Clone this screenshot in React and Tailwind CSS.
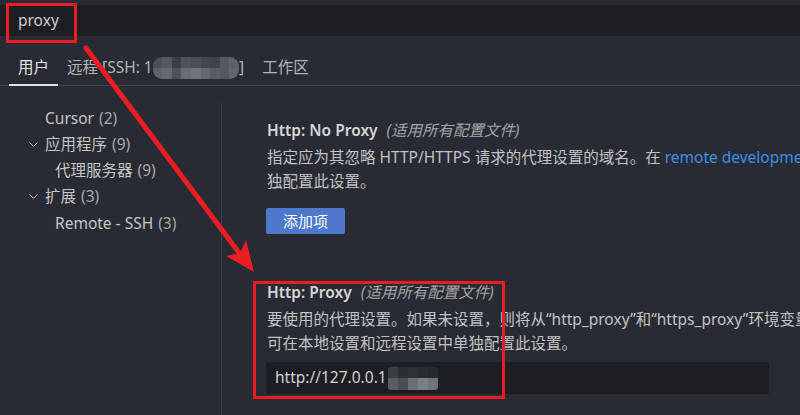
import { ChevronDown } from "lucide-react";

const tocItems = [
  { label: "Cursor", count: 2, level: 0 },
  { label: "应用程序", count: 9, level: 0, open: true },
  { label: "代理服务器", count: 9, level: 1 },
  { label: "扩展", count: 3, level: 0, open: true },
  { label: "Remote - SSH", count: 3, level: 1 },
];

// mosaic blocks used to hide the host address
const tabMosaicTop = [
  "bg-[#4c4f55]", "bg-[#55585e]", "bg-[#3a3d43]", "bg-[#4f5258]", "bg-[#4a4d53]",
  "bg-[#44474d]", "bg-[#3f4248]", "bg-[#55585e]", "bg-[#5e6167]",
];
const tabMosaicBottom = [
  "bg-[#5f6268]", "bg-[#66696f]", "bg-[#4e5157]", "bg-[#6a6d73]", "bg-[#707379]",
  "bg-[#65686e]", "bg-[#5a5d63]", "bg-[#55585e]", "bg-[#62656b]",
];
const inputMosaicTop = ["bg-[#3b3e43]", "bg-[#2c2e32]", "bg-[#303236]", "bg-[#2a2c30]", "bg-[#26282c]"];
const inputMosaicBottom = ["bg-[#5a5e64]", "bg-[#4a4e54]", "bg-[#6b7076]", "bg-[#7a7f86]", "bg-[#6e7379]"];

const Mosaic = ({ top, bottom, cell, className }) => (
  <span className={`inline-flex flex-col overflow-hidden blur-[0.6px] ${className}`}>
    <span className="flex">
      {top.map((c, i) => (
        <span key={i} className={`${cell} ${c}`} />
      ))}
    </span>
    <span className="flex">
      {bottom.map((c, i) => (
        <span key={i} className={`${cell} ${c}`} />
      ))}
    </span>
  </span>
);

const SettingTitle = ({ name }) => (
  <div className="h-[24px] flex items-center whitespace-nowrap">
    <span className="font-semibold text-[#d6d6d6]">{name}</span>
    <span className="ml-[9px] italic text-[#a4a4a4]">(适用所有配置文件)</span>
  </div>
);

const App = () => {
  return (
    <div className="relative w-[800px] h-[415px] overflow-hidden flex flex-col bg-[#282b33] text-[15.5px] text-[#c3c3c3] font-['Noto_Sans','Noto_Sans_CJK_SC',sans-serif]">
      <div className="h-[5px] shrink-0" />
      <div className="h-[31px] shrink-0 bg-[#1d1e22] flex items-center pl-[18px] text-[#cccccc]">
        proxy
      </div>

      {/* scope tabs */}
      <div className="mt-[16px] shrink-0 flex px-[9px] border-b border-[#43464d]">
        <div className="h-[34px] -mb-px px-[9px] flex items-center border-b-2 border-[#e2e2e2] text-[#e6e6e6]">
          用户
        </div>
        <div className="h-[34px] -mb-px px-[9px] flex items-center border-b-2 border-transparent text-[#b4b4b4] whitespace-nowrap">
          远程 [SSH: 1
          <Mosaic
            top={tabMosaicTop}
            bottom={tabMosaicBottom}
            cell="w-[9.6px] h-[11px]"
            className="rounded-[9px]"
          />
          ]
        </div>
        <div className="h-[34px] -mb-px px-[9px] flex items-center border-b-2 border-transparent text-[#b4b4b4]">
          工作区
        </div>
      </div>

      <div className="flex flex-1 min-h-0">
        {/* table of contents */}
        <div className="w-[221px] shrink-0 pt-[19px]">
          {tocItems.map((item) => (
            <div
              key={item.label}
              className={`h-[26.25px] flex items-center whitespace-nowrap ${
                item.level === 1 ? "pl-[55px]" : "pl-[26px]"
              }`}
            >
              {item.level === 0 && (
                <span className="w-[19px] flex items-center">
                  {item.open && <ChevronDown size={15} strokeWidth={1.6} className="text-[#c4c4c4]" />}
                </span>
              )}
              <span className="text-[#c6c6c6]">{item.label}</span>
              <span className="ml-[5px] text-[#a9a9a9]">({item.count})</span>
            </div>
          ))}
        </div>
        <div className="w-px mt-[17px] bg-[#3c3f47]" />

        {/* settings list */}
        <div className="flex-1 min-w-0 overflow-hidden pl-[45px] pt-[33px]">
          <SettingTitle name="Http: No Proxy" />
          <div className="mt-[2px] leading-[24px] whitespace-nowrap">
            <div>
              指定应为其忽略 HTTP/HTTPS 请求的代理设置的域名。在{" "}
              <span className="text-[#3d8fe6]">remote development</span> 环境中，可在本地设置和远程设置中单
            </div>
            <div>独配置此设置。</div>
          </div>
          <button className="mt-[15px] -ml-px h-[26px] w-[79px] flex items-center justify-center rounded-[2px] bg-[#4d78cc] text-white text-[15px]">
            添加项
          </button>

          <div className="mt-[47px]">
            <SettingTitle name="Http: Proxy" />
          </div>
          <div className="mt-[2px] leading-[24px] whitespace-nowrap">
            <div>要使用的代理设置。如果未设置，则将从“http_proxy”和“https_proxy”环境变量中继承。</div>
            <div>可在本地设置和远程设置中单独配置此设置。</div>
          </div>
          <div className="mt-[7px] -ml-px h-[32px] w-[503px] rounded-[2px] bg-[#1d1e22] flex items-center pl-[9px] text-[#d2d2d2] whitespace-nowrap">
            http://127.0.0.1
            <Mosaic
              top={inputMosaicTop}
              bottom={inputMosaicBottom}
              cell="w-[10px] h-[11.5px]"
              className="ml-[1px] rounded-[3px]"
            />
          </div>
        </div>
      </div>

      {/* annotations */}
      <div className="absolute left-[6px] top-[3px] w-[71px] h-[40px] border-[3px] border-[#ea1d25]" />
      <div className="absolute left-[253px] top-[281px] w-[252px] h-[118px] border-[3px] border-[#ea1d25]" />
      <svg className="absolute inset-0 pointer-events-none" width="800" height="415" viewBox="0 0 800 415">
        <line x1="86" y1="48" x2="240" y2="254" stroke="#ea1d25" strokeWidth="5" strokeLinecap="round" />
        <polygon points="254,272 226,256 240,253 246,240" fill="#ea1d25" />
      </svg>
    </div>
  );
};

export default App;
